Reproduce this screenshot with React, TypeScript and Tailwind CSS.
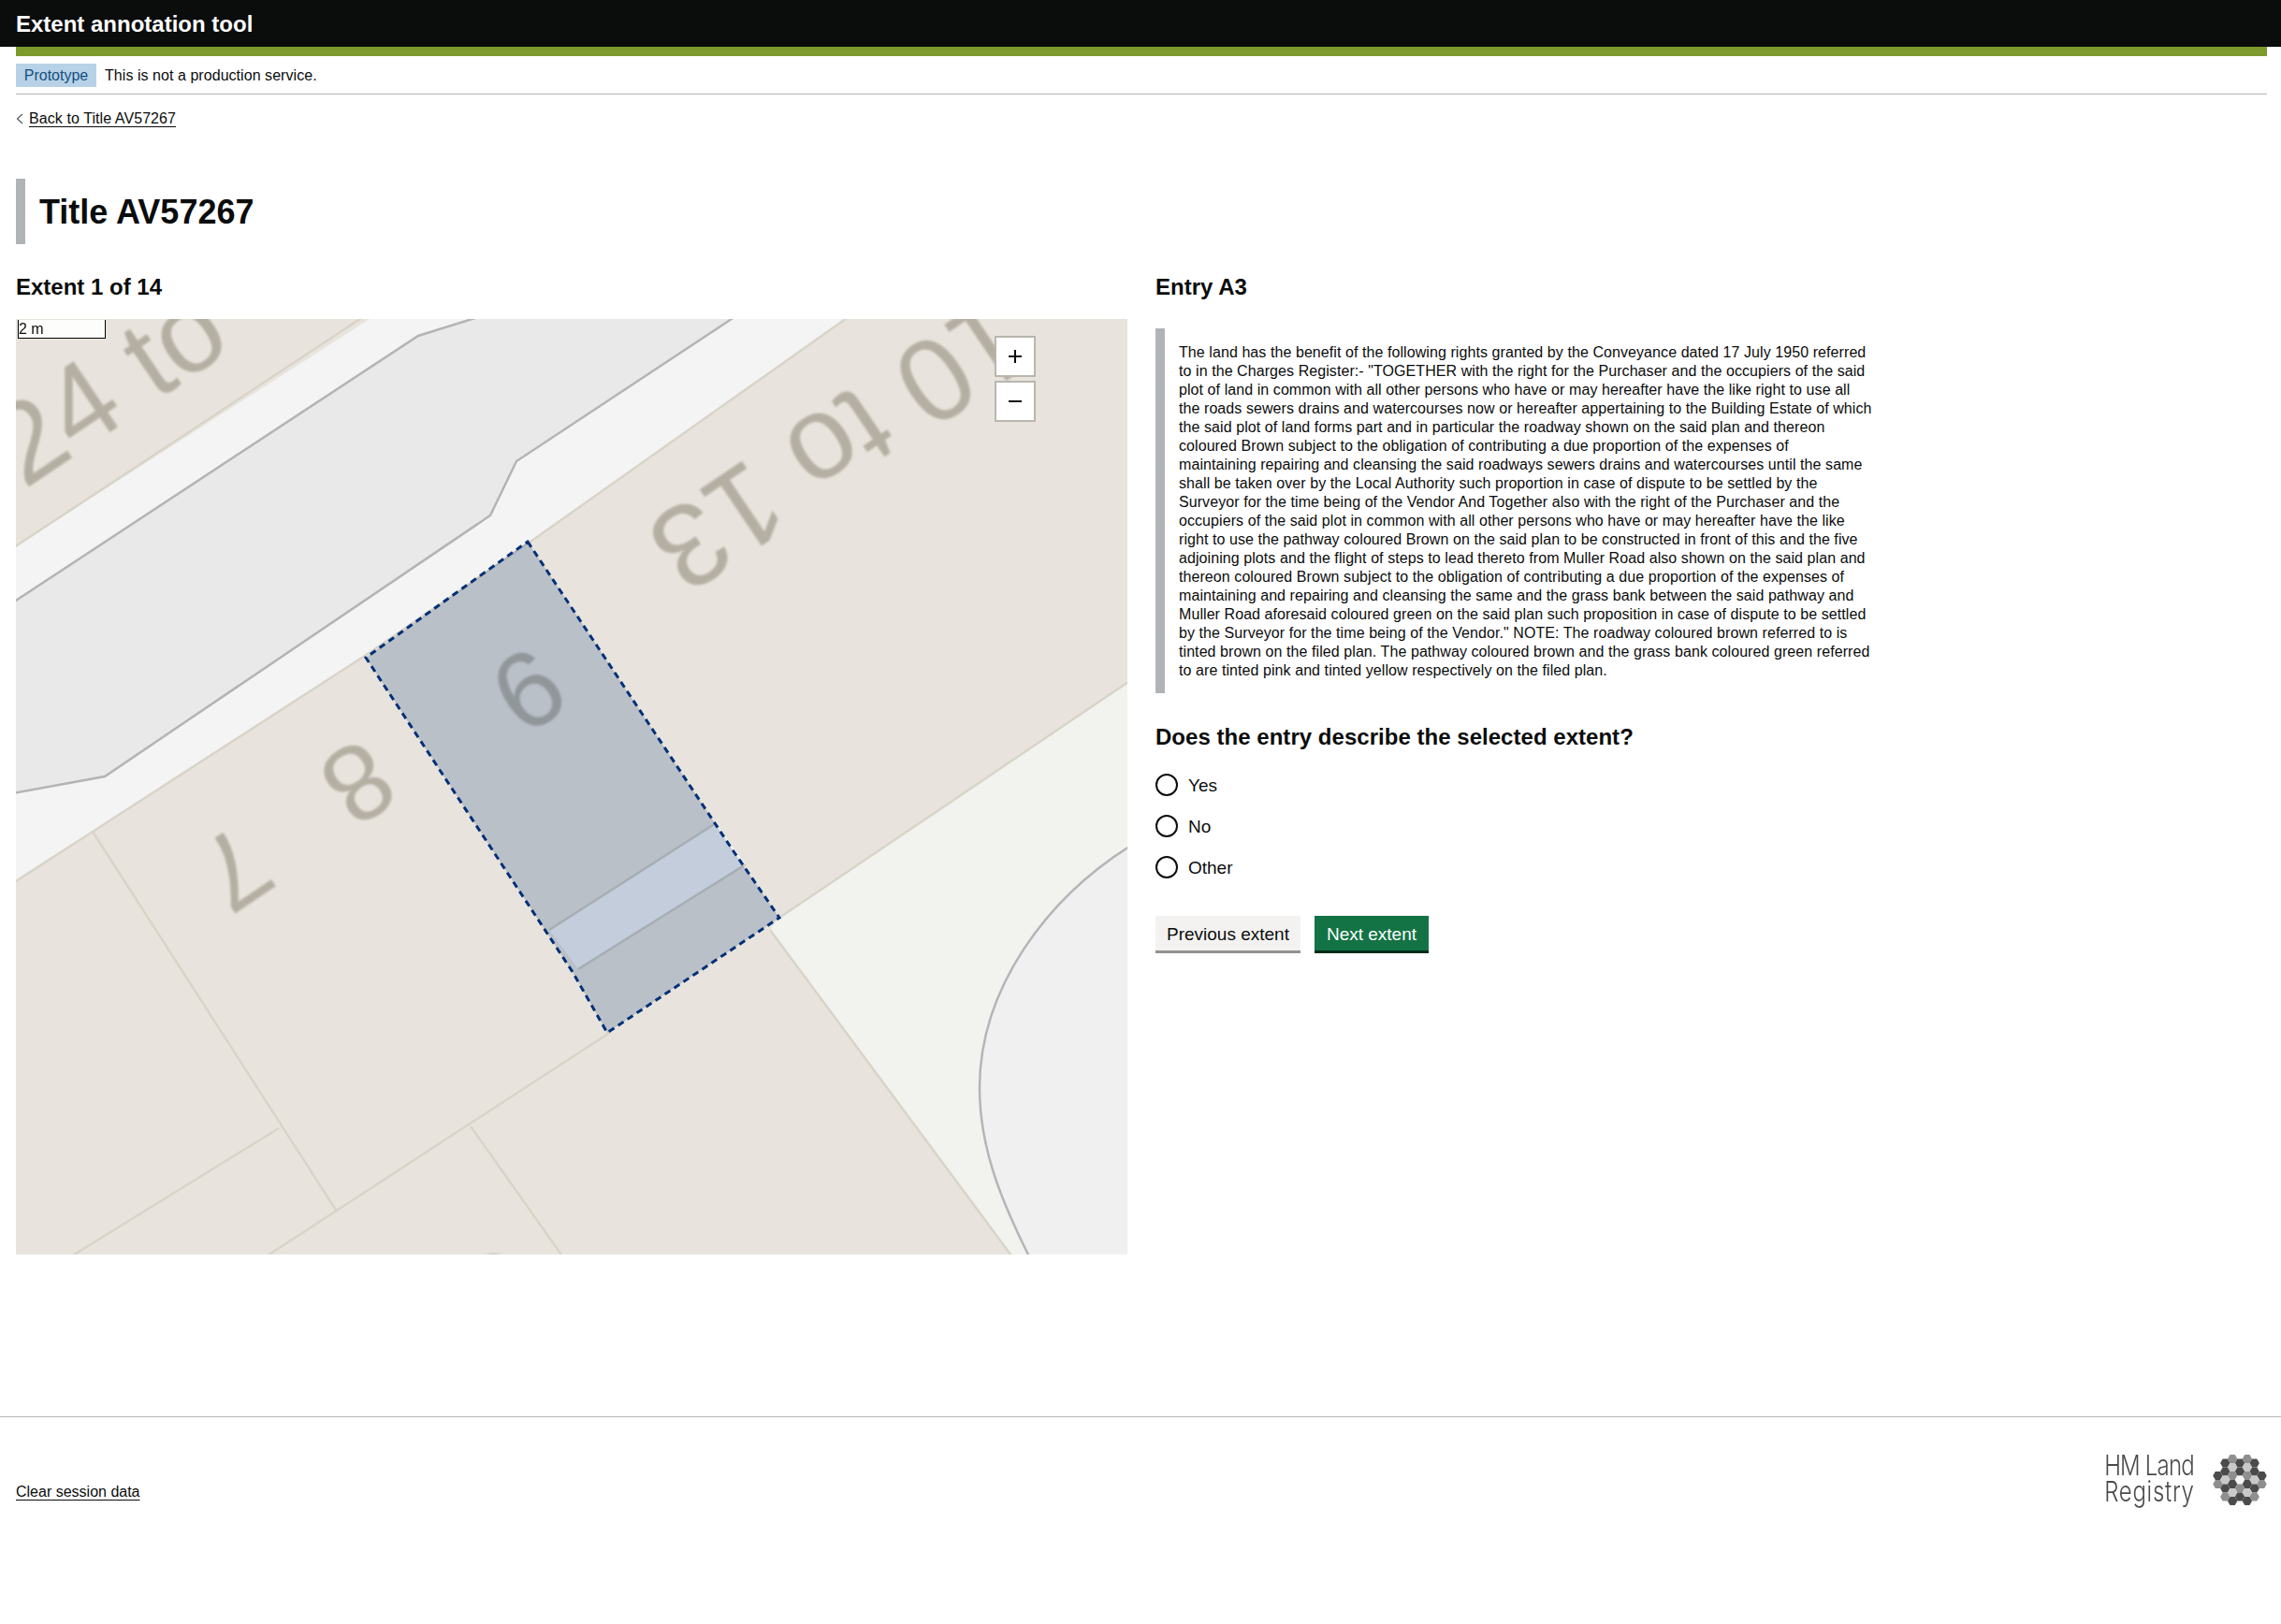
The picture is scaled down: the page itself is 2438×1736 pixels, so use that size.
import React from 'react';

const entryLines = [
  'The land has the benefit of the following rights granted by the Conveyance dated 17 July 1950 referred',
  'to in the Charges Register:- "TOGETHER with the right for the Purchaser and the occupiers of the said',
  'plot of land in common with all other persons who have or may hereafter have the like right to use all',
  'the roads sewers drains and watercourses now or hereafter appertaining to the Building Estate of which',
  'the said plot of land forms part and in particular the roadway shown on the said plan and thereon',
  'coloured Brown subject to the obligation of contributing a due proportion of the expenses of',
  'maintaining repairing and cleansing the said roadways sewers drains and watercourses until the same',
  'shall be taken over by the Local Authority such proportion in case of dispute to be settled by the',
  'Surveyor for the time being of the Vendor And Together also with the right of the Purchaser and the',
  'occupiers of the said plot in common with all other persons who have or may hereafter have the like',
  'right to use the pathway coloured Brown on the said plan to be constructed in front of this and the five',
  'adjoining plots and the flight of steps to lead thereto from Muller Road also shown on the said plan and',
  'thereon coloured Brown subject to the obligation of contributing a due proportion of the expenses of',
  'maintaining and repairing and cleansing the same and the grass bank between the said pathway and',
  'Muller Road aforesaid coloured green on the said plan such proposition in case of dispute to be settled',
  'by the Surveyor for the time being of the Vendor." NOTE: The roadway coloured brown referred to is',
  'tinted brown on the filed plan. The pathway coloured brown and the grass bank coloured green referred',
  'to are tinted pink and tinted yellow respectively on the filed plan.',
];

const DARK = '#4b4b4b';
const MID = '#8f8f8f';
const LIGHT = '#c9c9c9';

// column, half-row, fill
const hexes: [number, number, string][] = [
  [-1, -5, MID], [1, -5, MID],
  [-2, -4, DARK], [0, -4, DARK], [2, -4, DARK],
  [-1, -3, LIGHT], [1, -3, LIGHT],
  [-2, -2, DARK], [0, -2, DARK], [2, -2, DARK],
  [-3, -1, DARK], [-1, -1, MID], [1, -1, MID], [3, -1, DARK],
  [-2, 0, LIGHT], [0, 0, '#f4f4f4'], [2, 0, LIGHT],
  [-3, 1, MID], [-1, 1, DARK], [1, 1, DARK], [3, 1, MID],
  [-2, 2, DARK], [0, 2, MID], [2, 2, DARK],
  [-1, 3, LIGHT], [1, 3, LIGHT],
  [-2, 4, MID], [0, 4, DARK], [2, 4, MID],
  [-1, 5, DARK], [1, 5, DARK],
];

const HexLogo = () => (
  <svg width="58" height="58" viewBox="-29 -29 58 58">
    {hexes.map(([c, r, fill]) => (
      <polygon
        key={`${c}_${r}`}
        transform={`translate(${c * 7.85} ${r * 4.5})`}
        points="-5.2,0 -2.6,-4.5 2.6,-4.5 5.2,0 2.6,4.5 -2.6,4.5"
        fill={fill}
      />
    ))}
  </svg>
);

const MapLabel = ({ x, y, angle, size = 115, children }: { x: number; y: number; angle: number; size?: number; children: React.ReactNode }) => (
  <text
    transform={`translate(${x} ${y}) rotate(${angle})`}
    textAnchor="middle"
    dominantBaseline="central"
    fontFamily="Liberation Sans, sans-serif"
    fontSize={size}
    fill="#b5afa3"
  >
    {children}
  </text>
);

const MapDrawing = () => (
  <svg width="1188" height="1000" viewBox="0 0 1188 1000" className="block">
    <rect x="-20" y="-20" width="1228" height="1040" fill="#e8e4dd" />
    <g className="blur-[0.6px]">
      {/* pavement */}
      <polygon points="-20,256 378,0 398,-20 915,-20 887,0 550,238 373,360 82,548 -20,614" fill="#f4f4f4" />
      <polyline points="-20,256 398,-20" fill="none" stroke="#d9d4c8" strokeWidth="2.5" />
      <polyline points="-20,614 82,548 373,360 550,238 915,-20" fill="none" stroke="#d9d4c8" strokeWidth="2.5" />
      {/* road */}
      <polygon points="-20,314 430,18 494,-2 498,-20 795,-20 535,152 507,210 95,489 -20,510" fill="#e9e9ea" stroke="#b4b4b6" strokeWidth="2.5" />
      {/* corner plot and turning head */}
      <polygon points="816,640 1220,367 1220,1020 1078,1020 806,653" fill="#f2f3ee" />
      <path d="M1210,552 C1098,615 1030,720 1030,822 C1030,890 1056,950 1092,1020 L1210,1020 Z" fill="#f0f0f1" stroke="#b5b5b8" strokeWidth="2.5" />
      {/* plot boundaries */}
      <g fill="none" stroke="#d9d4c8" strokeWidth="2.5">
        <line x1="82" y1="548" x2="343" y2="954" />
        <line x1="281" y1="865" x2="30" y2="1020" />
        <line x1="636" y1="762" x2="240" y2="1020" />
        <line x1="486" y1="863" x2="597" y2="1020" />
        <line x1="816" y1="640" x2="1220" y2="367" />
        <line x1="806" y1="653" x2="1078" y2="1020" />
      </g>
      {/* strip crossing the extent */}
      <polygon points="570,653 748,539 780,583 601,695" fill="#f4f4f4" />
      <line x1="570" y1="653" x2="748" y2="539" stroke="#d0ccc2" strokeWidth="2.5" />
      <line x1="601" y1="695" x2="780" y2="583" stroke="#d0ccc2" strokeWidth="2.5" />
    </g>
    <g className="blur-[1px]">
      <MapLabel x={98} y={72} angle={-34} size={122}>24 to</MapLabel>
      <MapLabel x={881} y={134} angle={146} size={126}>10 to 13</MapLabel>
      <MapLabel x={548} y={397} angle={146}>9</MapLabel>
      <MapLabel x={366} y={496} angle={146}>8</MapLabel>
      <MapLabel x={234} y={588} angle={146}>7</MapLabel>
      <MapLabel x={516} y={1040} angle={146}>5</MapLabel>
    </g>
    {/* selected extent */}
    <polygon
      points="547,238 767,569 816,640 632,763 595,698 374,362"
      fill="#003078"
      fillOpacity="0.2"
      stroke="#003078"
      strokeWidth="3"
      strokeDasharray="7 5"
    />
  </svg>
);

const RadioRow = ({ label }: { label: string }) => (
  <label className="flex items-center h-[44px]">
    <input type="radio" name="describes" className="appearance-none w-6 h-6 rounded-full border-2 border-[#0b0c0c] bg-white" />
    <span className="ml-[11px] text-[19px] leading-[25px]">{label}</span>
  </label>
);

export default function App() {
  return (
    <div className="min-h-screen bg-white font-['Liberation_Sans',Arial,sans-serif] text-[#0b0c0c]">
      {/* Header */}
      <header className="h-[50px] bg-[#0b0c0c] pl-[17px] pt-[2px] flex items-center">
        <span className="text-white font-bold text-[24px] leading-none">Extent annotation tool</span>
      </header>

      <div className="pl-[17px] pr-[15px]">
        <div className="h-[10px] bg-[#7c9a2c]" />

        {/* Phase banner */}
        <div className="h-[41px] pt-[8px] border-b border-[#b1b4b6] flex items-start">
          <span className="h-[25px] w-[86px] bg-[#b7d2e6] text-[#144e81] text-[16px] leading-[25px] text-center">Prototype</span>
          <span className="ml-[9px] text-[16px] leading-[25px] tracking-[0.05px]">This is not a production service.</span>
        </div>

        {/* Back link */}
        <div className="h-[50px] pt-[2px] flex items-center">
          <svg width="8" height="12" viewBox="0 0 8 12" className="mr-[6px]">
            <path d="M7 1 L1.5 6 L7 11" fill="none" stroke="#505a5f" strokeWidth="1.2" />
          </svg>
          <a className="text-[16px] leading-[20px] tracking-[0.08px] underline underline-offset-[3px] decoration-1">Back to Title AV57267</a>
        </div>

        {/* Title */}
        <div className="mt-[40px] h-[70px] pt-[2px] border-l-[10px] border-[#b1b4b6] pl-[15px] flex items-center">
          <h1 className="font-bold text-[36px] leading-none">Title AV57267</h1>
        </div>

        {/* Two columns */}
        <div className="mt-[30px] flex gap-[30px]">
          <div className="w-[1188px]">
            <h2 className="font-bold text-[24px] leading-[30px] pt-[1px] mb-[19px]">Extent 1 of 14</h2>
            <div className="relative w-[1188px] h-[1000px] overflow-hidden">
              <MapDrawing />
              <div className="absolute left-[2px] top-[1px] w-[94px] h-[20px] bg-white/90 border-x border-b border-black text-[16px] leading-[20px] pl-[0px]">2 m</div>
              <div className="absolute left-[1046px] top-[18px] flex flex-col gap-[4px]">
                <button className="w-[44px] h-[44px] bg-white border-2 border-[#b9b6ad] flex items-center justify-center">
                  <svg width="16" height="16" viewBox="0 0 16 16"><path d="M8 1 V15 M1 8 H15" stroke="#0b0c0c" strokeWidth="2" /></svg>
                </button>
                <button className="w-[44px] h-[44px] bg-white border-2 border-[#b9b6ad] flex items-center justify-center">
                  <svg width="16" height="16" viewBox="0 0 16 16"><path d="M1 8 H15" stroke="#0b0c0c" strokeWidth="2" /></svg>
                </button>
              </div>
            </div>
          </div>

          <div className="w-[770px]">
            <h2 className="font-bold text-[24px] leading-[30px] pt-[1px] mb-[29px]">Entry A3</h2>
            <div className="h-[390px] border-l-[10px] border-[#b1b4b6] pl-[15px] pt-[16px] text-[16px] leading-[20px] tracking-[0.075px] whitespace-nowrap">
              {entryLines.map((line) => (
                <div key={line}>{line}</div>
              ))}
            </div>
            <h2 className="mt-[32px] font-bold text-[24px] leading-[30px] tracking-[0.03px]">Does the entry describe the selected extent?</h2>
            <div className="mt-[14px]">
              <RadioRow label="Yes" />
              <RadioRow label="No" />
              <RadioRow label="Other" />
            </div>
            <div className="mt-[30px] flex gap-[15px]">
              <button className="h-[37px] pt-[2px] px-[12px] mb-[3px] bg-[#f3f2f1] shadow-[0_3px_0_#929191] text-[19px] leading-none">Previous extent</button>
              <button className="h-[37px] pt-[2px] px-[12px] w-[122px] mb-[3px] bg-[#137344] shadow-[0_3px_0_#002d18] text-white text-[19px] leading-none">Next extent</button>
            </div>
          </div>
        </div>
      </div>

      {/* Footer */}
      <footer className="mt-[173px] border-t border-[#b1b4b6] pl-[17px] pr-[15px] pt-[38px] flex items-end justify-between">
        <a className="mb-[6px] text-[16px] leading-[20px] underline underline-offset-[3px] decoration-1">Clear session data</a>
        <div className="flex items-center gap-[19px]">
          <div className="-mt-[4px] font-['Inter',sans-serif] font-light text-[#4b4b4b] text-[30px] leading-[28px] tracking-[-1px] scale-x-[0.8] origin-right">
            <div>HM Land</div>
            <div className="tracking-[0.9px]">Registry</div>
          </div>
          <HexLogo />
        </div>
      </footer>
    </div>
  );
}
